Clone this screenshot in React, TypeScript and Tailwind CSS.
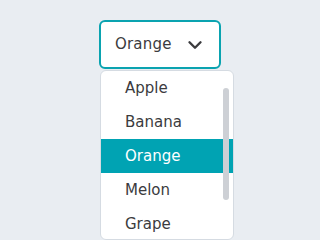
import { ChevronDown } from "lucide-react";

const fruits = ["Apple", "Banana", "Orange", "Melon", "Grape"];

export default function App() {
  return (
    <div className="h-[240px] w-[320px] overflow-hidden bg-[#e9edf2] pt-5 pl-[99px] font-['DejaVu_Sans',sans-serif] text-[15px] text-[#3b3b3e]">
      {/* Select trigger */}
      <button className="flex h-[49px] w-[122px] items-center justify-between rounded-md border-2 border-[#0aa3b0] bg-white pl-[14px] pr-[13px]">
        <span className="tracking-[0.2px]">Orange</span>
        <ChevronDown size={22} strokeWidth={2.6} className="text-[#3b3b3e]" />
      </button>

      {/* Options list */}
      <div className="relative mt-[1px] ml-[1px] h-[170px] w-[134px] overflow-hidden rounded-md border border-[#d5dbe2] bg-white">
        <ul>
          {fruits.map((f) => (
            <li
              key={f}
              className={
                f === "Orange"
                  ? "flex h-[34px] items-center bg-[#00a3b3] pl-[24px] text-white"
                  : "flex h-[34px] items-center pl-[24px]"
              }
            >
              {f}
            </li>
          ))}
        </ul>
        <div className="absolute right-[4px] top-[17px] h-[112px] w-[6px] rounded-full bg-[#cdd0d5]" />
      </div>
    </div>
  );
}
